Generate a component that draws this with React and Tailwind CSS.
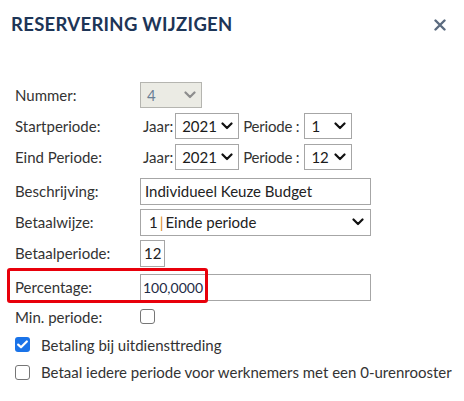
import React from "react";

function Chevron({ className = "" }) {
  return (
    <svg width="12" height="8" viewBox="0 0 12 8" className={className}>
      <path d="M1.5 1.5 L6 6 L10.5 1.5" fill="none" stroke="currentColor" strokeWidth="2.2" strokeLinecap="round" strokeLinejoin="round" />
    </svg>
  );
}

function Select({ value, width, disabled }) {
  return (
    <div
      className={
        "flex h-[26px] items-center justify-between border pl-[6px] pr-[5px] " +
        (disabled ? "border-[#b5b5b0] bg-[#ebebe4] text-[#6a7f95]" : "border-[#a6a6a6] bg-white text-[#1b1b1b]")
      }
      style={{ width }}
    >
      <span>{value}</span>
      <Chevron className={disabled ? "text-[#8d8d8d]" : "text-[#111]"} />
    </div>
  );
}

function Row({ label, children, h = "h-[31px]" }) {
  return (
    <div className={"flex items-center " + h}>
      <div className="w-[140px] shrink-0 pl-[15px]">{label}</div>
      {children}
    </div>
  );
}

function Checkbox({ checked }) {
  return checked ? (
    <div className="flex h-[15px] w-[15px] items-center justify-center rounded-[3px] bg-[#1a73e8]">
      <svg width="11" height="9" viewBox="0 0 11 9">
        <path d="M1.2 4.6 L4 7.3 L9.8 1.5" fill="none" stroke="white" strokeWidth="2.2" strokeLinecap="round" strokeLinejoin="round" />
      </svg>
    </div>
  ) : (
    <div className="h-[15px] w-[15px] rounded-[3px] border border-[#767676] bg-white" />
  );
}

export default function App() {
  return (
    <div className="relative h-[401px] w-[464px] bg-white text-[15px] text-[#333] font-['Source_Sans_Pro','Lato',sans-serif]">
      <div className="flex items-center justify-between pl-[11px] pr-[18px] pt-[11px]">
        <h1 className="text-[18.5px] font-bold tracking-[0.3px] text-[#1d3557]">RESERVERING WIJZIGEN</h1>
        <svg width="12" height="12" viewBox="0 0 12 12" className="text-[#5b6b7f]">
          <path d="M1.5 1.5 L10.5 10.5 M10.5 1.5 L1.5 10.5" stroke="currentColor" strokeWidth="2.4" strokeLinecap="round" />
        </svg>
      </div>

      <div className="mt-[41px] flex flex-col">
        <Row label="Nummer:">
          <Select value="4" width={62} disabled />
        </Row>
        <Row label="Startperiode:">
          <span className="pl-[3px] pr-[2px]">Jaar:</span>
          <Select value="2021" width={64} />
          <span className="pl-[4px] pr-[5px] tracking-[-0.2px]">Periode :</span>
          <Select value="1" width={48} />
        </Row>
        <Row label="Eind Periode:">
          <span className="pl-[3px] pr-[2px]">Jaar:</span>
          <Select value="2021" width={64} />
          <span className="pl-[4px] pr-[5px] tracking-[-0.2px]">Periode :</span>
          <Select value="12" width={48} />
        </Row>
        <div className="h-[3px]" />
        <Row label="Beschrijving:">
          <div className="flex h-[27px] w-[231px] items-center border border-[#a6a6a6] px-[4px] text-[#222]">
            Individueel Keuze Budget
          </div>
        </Row>
        <Row label="Betaalwijze:">
          <div className="flex h-[27px] w-[231px] items-center justify-between border border-[#a6a6a6] pl-[8px] pr-[6px] text-[#222]">
            <span>
              1<span className="mx-[2px] text-[#d98a1c]">|</span>Einde periode
            </span>
            <Chevron className="text-[#111]" />
          </div>
        </Row>
        <Row label="Betaalperiode:">
          <div className="flex h-[27px] w-[25px] items-center border border-[#a6a6a6] px-[3px] text-[#222]">12</div>
        </Row>
        <div className="h-[3px]" />
        <Row label="Percentage:">
          <div className="flex h-[27px] w-[231px] items-center border border-[#a6a6a6] px-[2px] text-[14px] text-[#1d2b45]">100,0000</div>
        </Row>
        <Row label="Min. periode:" h="h-[28px]">
          <Checkbox />
        </Row>
        <div className="flex h-[28px] items-center gap-[11px] pl-[15px]">
          <Checkbox checked />
          <span>Betaling bij uitdiensttreding</span>
        </div>
        <div className="flex h-[27px] items-center gap-[11px] pl-[15px]">
          <Checkbox />
          <span>Betaal iedere periode voor werknemers met een 0-urenrooster</span>
        </div>
      </div>

      <div className="pointer-events-none absolute left-[7px] top-[268px] h-[35px] w-[201px] rounded-[3px] border-[3px] border-[#e8000b]" />
    </div>
  );
}
